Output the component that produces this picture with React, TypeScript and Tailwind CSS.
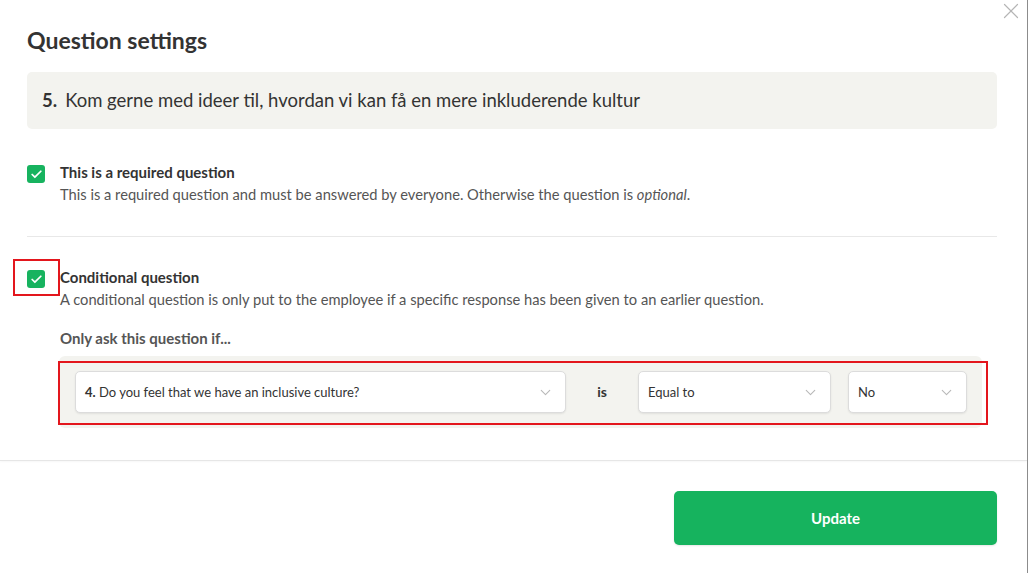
import { ChevronDown, X, Check } from "lucide-react";

function CheckBox() {
  return (
    <div className="w-[18px] h-[18px] rounded-[3px] bg-[#17b35f] flex items-center justify-center shrink-0">
      <Check className="w-[13px] h-[13px] text-white" strokeWidth={3.2} />
    </div>
  );
}

function Select({ width, children }: { width: string; children: React.ReactNode }) {
  return (
    <div
      className={`${width} h-[42px] bg-white border border-[#dcdcdc] rounded-[5px] shadow-[0_1px_2px_rgba(0,0,0,0.08)] flex items-center justify-between pl-[9px] pr-[11px] text-[13px] text-[#333]`}
    >
      <span>{children}</span>
      <ChevronDown className="w-[17px] h-[17px] text-[#b8b8b8]" strokeWidth={1.5} />
    </div>
  );
}

export default function App() {
  return (
    <div
      className="relative w-[1028px] h-[573px] bg-white border-r border-[#8c8c8c] overflow-hidden"
      style={{ fontFamily: "Lato, 'Open Sans', sans-serif" }}
    >
      <button className="absolute top-[-2px] left-[998px] text-[#b5b5b5]">
        <X className="w-[26px] h-[26px]" strokeWidth={1.1} />
      </button>

      <div className="pl-[27px] pr-[30px] pt-[26px]">
        <h1 className="text-[23px] leading-[28px] font-bold text-[#333]">Question settings</h1>

        <div className="mt-[18px] h-[57px] bg-[#f3f3ef] rounded-[5px] flex items-center px-[15px] text-[18.5px] text-[#333]">
          <span className="font-bold mr-[8px]">5.</span>
          <span>Kom gerne med ideer til, hvordan vi kan få en mere inkluderende kultur</span>
        </div>

        <div className="mt-[32px] flex gap-[15px]">
          <div className="mt-[4px]">
            <CheckBox />
          </div>
          <div className="leading-[22px]">
            <div className="font-bold text-[15px] text-[#333]">This is a required question</div>
            <div className="text-[14.7px] text-[#555]">
              This is a required question and must be answered by everyone. Otherwise the question is{" "}
              <em>optional</em>.
            </div>
          </div>
        </div>

        <div className="mt-[31px] h-px bg-[#e8e8e8]" />

        <div className="mt-[29px] flex gap-[15px]">
          <div className="relative mt-[4px] h-[18px]">
            <CheckBox />
            <div className="absolute left-[-14px] top-[-11px] w-[47px] h-[37px] border-2 border-[#e3161d]" />
          </div>
          <div className="flex-1 leading-[22px]">
            <div className="font-bold text-[15px] text-[#333]">Conditional question</div>
            <div className="text-[14.7px] text-[#555]">
              A conditional question is only put to the employee if a specific response has been given to an earlier
              question.
            </div>
            <div className="mt-[17px] font-bold text-[15px] text-[#555]">Only ask this question if...</div>

            <div className="relative mt-[7px] -ml-px mr-[15px] h-[72px] bg-[#f3f3ef] rounded-[6px] flex items-center pl-[16px] pr-[15px]">
              <Select width="w-[491px]">
                <b>4.</b> Do you feel that we have an inclusive culture?
              </Select>
              <div className="w-[72px] text-center font-bold text-[14px] text-[#333]">is</div>
              <Select width="w-[193px]">Equal to</Select>
              <div className="w-[17px]" />
              <Select width="w-[119px]">No</Select>
              <div className="absolute left-[-1px] top-[5px] w-[930px] h-[64px] border-2 border-[#e3161d]" />
            </div>
          </div>
        </div>
      </div>

      <div className="mt-[32px] h-px bg-[#e6e6e6] shadow-[0_1px_2px_rgba(0,0,0,0.05)]" />

      <div className="flex justify-end pr-[30px] pt-[30px]">
        <button className="w-[323px] h-[54px] rounded-[5px] bg-[#16b35e] text-white text-[15px] font-bold shadow-[0_1px_2px_rgba(0,0,0,0.1)]">
          Update
        </button>
      </div>
    </div>
  );
}
